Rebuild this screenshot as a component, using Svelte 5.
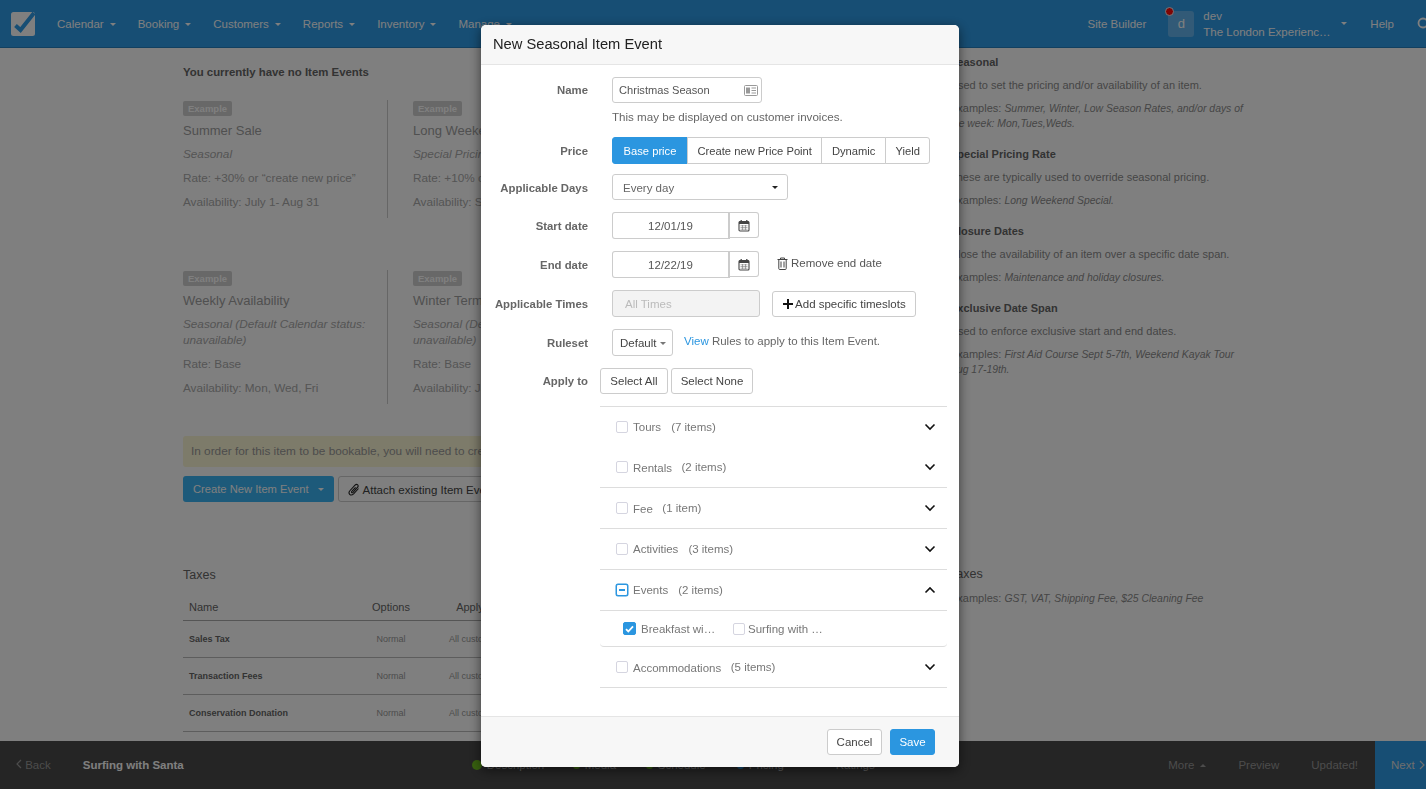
<script>
  const navItems = ['Calendar', 'Booking', 'Customers', 'Reports', 'Inventory', 'Manage'];

  const eventCards = [
    [
      { title: 'Summer Sale', kind: 'Seasonal', rate: 'Rate: +30% or “create new price”', avail: 'Availability: July 1- Aug 31' },
      { title: 'Long Weekend', kind: 'Special Pricing Rate', rate: 'Rate: +10% or “create new price”', avail: 'Availability: Sept 1-3' }
    ],
    [
      { title: 'Weekly Availability', kind: 'Seasonal (Default Calendar status: unavailable)', rate: 'Rate: Base', avail: 'Availability: Mon, Wed, Fri' },
      { title: 'Winter Term', kind: 'Seasonal (Default Calendar status: unavailable)', rate: 'Rate: Base', avail: 'Availability: Jan 5-Mar 20' }
    ]
  ];

  const taxes = ['Sales Tax', 'Transaction Fees', 'Conservation Donation'];

  const steps = [
    { label: 'Description', color: '#6fc01f', size: 10, width: 101 },
    { label: 'Media', color: '#6fc01f', size: 7, width: 73 },
    { label: 'Schedule', color: '#6fc01f', size: 7, width: 91 },
    { label: 'Pricing', color: '#2e9ce8', size: 7, width: 87 },
    { label: 'Ratings', color: 'transparent', size: 7, width: 60 }
  ];

  const prices = ['Base price', 'Create new Price Point', 'Dynamic', 'Yield'];

  const categories = [
    { name: 'Tours', count: '(7 items)', line: false },
    { name: 'Rentals', count: '(2 items)', line: true, low: true },
    { name: 'Fee', count: '(1 item)', line: true, low: true },
    { name: 'Activities', count: '(3 items)', line: true },
    { name: 'Events', count: '(2 items)', line: true, open: true },
    { name: 'Accommodations', count: '(5 items)', line: true, low: true }
  ];
</script>

{#snippet calendar()}
  <svg class="ico" width="12" height="13" viewBox="0 0 12 13" aria-hidden="true">
    <rect x="1" y="2.5" width="10" height="9.5" rx="1" fill="none" stroke="#444" stroke-width="1.1"/>
    <rect x="1" y="2.5" width="10" height="2.5" fill="#444"/>
    <path d="M3.2 1v2M8.8 1v2" stroke="#444" stroke-width="1.3"/>
    <path d="M2.5 6.8h7M2.5 8.5h7M2.5 10.2h7M4.5 6v5M7.5 6v5" stroke="#777" stroke-width=".6"/>
  </svg>
{/snippet}

{#snippet chevron(up)}
  <svg class="chev" width="12" height="8" viewBox="0 0 12 8" aria-hidden="true">
    <path d={up ? 'M1.5 6.5 6 2l4.500 4.500' : 'M1.500 1.500 6 6l4.500-4.500'} fill="none" stroke="#111" stroke-width="1.600"/>
  </svg>
{/snippet}

<div class="page">
  <nav class="topbar">
    <svg class="logo" width="26" height="26" viewBox="0 0 26 26" aria-hidden="true">
      <rect x="0" y="2" width="24" height="24" rx="2.500" fill="#fff"/>
      <path d="M4.500 15.500 9.500 20 23 3" fill="none" stroke="#2e9ce8" stroke-width="4"/>
    </svg>
    <ul class="menu">
      {#each navItems as item}
        <li>{item}<span class="caret"></span></li>
      {/each}
    </ul>
    <div class="nav-right">
      <span>Site Builder</span>
      <div class="account">
        <div class="avatar">d<span class="dot"></span></div>
        <div class="who">
          <div>dev</div>
          <div>The London Experienc…</div>
        </div>
        <span class="caret"></span>
      </div>
      <span>Help</span>
      <svg class="search" width="14" height="14" viewBox="0 0 14 14" aria-hidden="true">
        <circle cx="6" cy="6" r="4.500" fill="none" stroke="#fff" stroke-width="1.800"/>
        <path d="m9.500 9.500 4 4" stroke="#fff" stroke-width="2"/>
      </svg>
    </div>
  </nav>

  <main class="content">
    <section class="left">
      <h4>You currently have no Item Events</h4>
      {#each eventCards as row}
        <div class="card-row">
          {#each row as card}
            <article class="card">
              <span class="badge">Example</span>
              <h3>{card.title}</h3>
              <p><em>{card.kind}</em></p>
              <p>{card.rate}</p>
              <p>{card.avail}</p>
            </article>
          {/each}
        </div>
      {/each}

      <div class="alert">In order for this item to be bookable, you will need to create an Item Event.</div>
      <div class="actions">
        <button class="btn-create">Create New Item Event<span class="caret"></span></button>
        <button class="btn-attach">
          <svg width="12" height="13" viewBox="0 0 12 13" aria-hidden="true">
            <path d="M10.500 5.500 5.600 10.800c-1.300 1.300-3 1.400-3.900.5-.9-.9-.8-2.500.4-3.800L7 2.200c.9-.9 2-1 2.700-.4.700.7.600 1.800-.3 2.700L5 9.300c-.5.500-1 .5-1.300.2-.3-.3-.2-.8.300-1.300l3.600-3.900" fill="none" stroke="#222" stroke-width="1.100"/>
          </svg>
          Attach existing Item Event
        </button>
      </div>

      <h2 class="taxes">Taxes</h2>
      <table>
        <thead>
          <tr><th class="c-name">Name</th><th class="c-opt">Options</th><th class="c-apply">Apply to</th><th></th></tr>
        </thead>
        <tbody>
          {#each taxes as tax}
            <tr><td class="c-name"><b>{tax}</b></td><td class="c-opt">Normal</td><td class="c-apply">All customers</td><td></td></tr>
          {/each}
        </tbody>
      </table>
    </section>

    <aside class="help">
      <h5>Seasonal</h5>
      <p>Used to set the pricing and/or availability of an item.</p>
      <p>Examples: <em>Summer, Winter, Low Season Rates, and/or days of the week: Mon,Tues,Weds.</em></p>
      <h5>Special Pricing Rate</h5>
      <p>These are typically used to override seasonal pricing.</p>
      <p>Examples: <em>Long Weekend Special.</em></p>
      <h5>Closure Dates</h5>
      <p>Close the availability of an item over a specific date span.</p>
      <p>Examples: <em>Maintenance and holiday closures.</em></p>
      <h5>Exclusive Date Span</h5>
      <p>Used to enforce exclusive start and end dates.</p>
      <p>Examples: <em>First Aid Course Sept 5-7th, Weekend Kayak Tour Aug 17-19th.</em></p>
      <h2 class="help-taxes">Taxes</h2>
      <p>Examples: <em>GST, VAT, Shipping Fee, $25 Cleaning Fee</em></p>
    </aside>
  </main>

  <footer class="bottombar">
    <span class="back">
      <svg width="6" height="10" viewBox="0 0 6 10" aria-hidden="true"><path d="M5 1 1 5l4 4" fill="none" stroke="currentColor" stroke-width="1.200"/></svg>
      Back
    </span>
    <span class="item-name">Surfing with Santa</span>
    <div class="steps">
      {#each steps as step}
        <span class="step" style="width:{step.width}px"><i style="background:{step.color};width:{step.size}px;height:{step.size}px"></i>{step.label}</span>
      {/each}
    </div>
    <div class="bottom-right">
      <span>More<span class="caret up"></span></span>
      <span>Preview</span>
      <span>Updated!</span>
      <span class="next">Next
        <svg width="6" height="10" viewBox="0 0 6 10" aria-hidden="true"><path d="m1 1 4 4-4 4" fill="none" stroke="currentColor" stroke-width="1.200"/></svg>
      </span>
    </div>
  </footer>
</div>

<div class="backdrop"></div>

<div class="modal" role="dialog" aria-label="New Seasonal Item Event">
  <header class="modal-head">New Seasonal Item Event</header>

  <div class="modal-body">
    <div class="row">
      <div class="label top">Name</div>
      <div>
        <div class="input name-input">
          Christmas Season
          <svg width="14" height="11" viewBox="0 0 14 11" aria-hidden="true">
            <rect x=".5" y=".5" width="13" height="10" rx="1" fill="none" stroke="#999"/>
            <rect x="2" y="2.500" width="4" height="6" fill="#999"/>
            <path d="M7.500 3h4.500M7.500 5.500h4.500M7.500 8h4.500" stroke="#999"/>
          </svg>
        </div>
        <div class="hint">This may be displayed on customer invoices.</div>
      </div>
    </div>

    <div class="row">
      <div class="label">Price</div>
      <div class="seg">
        {#each prices as price, i}
          <button class:active={i === 0}>{price}</button>
        {/each}
      </div>
    </div>

    <div class="row days">
      <div class="label">Applicable Days</div>
      <div class="select">Every day<span class="caret dark"></span></div>
    </div>

    <div class="row">
      <div class="label">Start date</div>
      <div class="date">
        <div class="date-input">12/01/19</div>
        <button class="date-btn">{@render calendar()}</button>
      </div>
    </div>

    <div class="row">
      <div class="label">End date</div>
      <div class="inline">
        <div class="date">
          <div class="date-input">12/22/19</div>
          <button class="date-btn">{@render calendar()}</button>
        </div>
        <span class="remove">
          <svg width="11" height="13" viewBox="0 0 11 13" aria-hidden="true">
            <path d="M.5 2.500h10M3.500 2.500V1h4v1.500M1.800 2.500v9.200c0 .5.300.8.800.8h5.800c.5 0 .8-.3.800-.8V2.500M4 4.500v6M7 4.500v6" fill="none" stroke="#444" stroke-width="1"/>
          </svg>
          Remove end date
        </span>
      </div>
    </div>

    <div class="row">
      <div class="label">Applicable Times</div>
      <div class="inline times">
        <div class="all-times">All Times</div>
        <button class="btn">
          <svg width="10" height="10" viewBox="0 0 10 10" aria-hidden="true"><path d="M5 0v10M0 5h10" stroke="#111" stroke-width="2"/></svg>
          Add specific timeslots
        </button>
      </div>
    </div>

    <div class="row">
      <div class="label">Ruleset</div>
      <div class="inline ruleset">
        <button class="btn">Default<span class="caret grey"></span></button>
        <span class="rules"><a href="#rules">View</a> Rules to apply to this Item Event.</span>
      </div>
    </div>

    <div class="row">
      <div class="label">Apply to</div>
      <div class="apply">
        <button class="btn">Select All</button>
        <button class="btn">Select None</button>
      </div>
    </div>

    <div class="cats">
      {#each categories as cat}
        <div class="cat" class:line={cat.line} class:low={cat.low}>
          {#if cat.open}
            <span class="box partial"><span></span></span>
          {:else}
            <span class="box"></span>
          {/if}
          <span class="cat-name">{cat.name}</span>
          <span class="cat-count">{cat.count}</span>
          {@render chevron(cat.open)}
        </div>
        {#if cat.open}
          <div class="sub">
            <span class="box checked">
              <svg width="9" height="8" viewBox="0 0 9 8" aria-hidden="true"><path d="M1 4.200 3.300 6.500 8 1.300" fill="none" stroke="#fff" stroke-width="1.800"/></svg>
            </span>
            <span class="sub-name first">Breakfast wi…</span>
            <span class="box"></span>
            <span class="sub-name">Surfing with …</span>
          </div>
        {/if}
      {/each}
    </div>
  </div>

  <footer class="modal-foot">
    <button class="btn">Cancel</button>
    <button class="btn primary">Save</button>
  </footer>
</div>

<style>
  :global(body) {
    margin: 0;
    overflow: hidden;
    font-family: "Liberation Sans", Arial, sans-serif;
    font-size: 11.500px;
    color: #333;
  }
  button {
    font: inherit;
    cursor: pointer;
  }
  .page {
    height: 100vh;
    display: flex;
    flex-direction: column;
    background: #fff;
    overflow: hidden;
  }

  .topbar {
    flex: 0 0 47px;
    display: flex;
    align-items: center;
    padding-left: 11px;
    background: #2e9ce8;
    border-bottom: 1px solid #2580c0;
    color: #fff;
  }
  .logo {
    margin-top: -1px;
  }
  .menu {
    display: flex;
    gap: 22px;
    list-style: none;
    margin: 0 0 0 20px;
    padding: 0;
  }
  .caret {
    display: inline-block;
    width: 0;
    height: 0;
    margin-left: 6px;
    vertical-align: 2px;
    border-left: 3px solid transparent;
    border-right: 3px solid transparent;
    border-top: 3px solid currentColor;
  }
  .caret.up {
    border-top: 0;
    border-bottom: 3px solid currentColor;
  }
  .caret.dark {
    color: #222;
  }
  .caret.grey {
    color: #777;
  }
  .nav-right {
    margin-left: auto;
    display: flex;
    align-items: center;
    margin-right: -5px;
  }
  .account {
    display: flex;
    align-items: center;
    margin: 0 23px 0 22px;
  }
  .avatar {
    position: relative;
    width: 26px;
    height: 26px;
    border-radius: 3px;
    background: #65b5ee;
    text-align: center;
    line-height: 26px;
    font-size: 13px;
  }
  .dot {
    position: absolute;
    top: -4px;
    left: -3px;
    width: 7px;
    height: 7px;
    border-radius: 50%;
    background: #ff0a0a;
    border: 1px solid #e8f2fa;
  }
  .who {
    margin-left: 9px;
    line-height: 16px;
    width: 132px;
    white-space: nowrap;
  }
  .search {
    margin-left: 23px;
  }

  .content {
    flex: 1;
    min-height: 0;
    display: grid;
    grid-template-columns: 950px 1fr;
    overflow: hidden;
    font-size: 11.750px;
    color: #aaa;
  }
  .left {
    padding: 17px 10px 0 183px;
  }
  h4 {
    margin: 0 0 20px;
    font-size: 11.400px;
    line-height: 15px;
    color: #666;
  }
  .card-row {
    display: flex;
    margin-bottom: 52px;
  }
  .card {
    flex: 0 0 205px;
    min-height: 118px;
    box-sizing: border-box;
    margin-right: 25px;
    padding: 1px 12px 0 0;
    border-right: 1px solid #ccc;
  }
  .card + .card {
    border-right: 0;
  }
  .badge {
    display: inline-block;
    padding: 0 5px;
    height: 15px;
    line-height: 15px;
    border-radius: 2px;
    background: #d0d0d0;
    color: #fff;
    font-size: 9.500px;
    font-weight: bold;
  }
  .card h3 {
    margin: 6px 0 6px;
    font-size: 13px;
    font-weight: normal;
    line-height: 18px;
    color: #a0a0a0;
  }
  .card p {
    margin: 0 0 8px;
    line-height: 16px;
  }
  .alert {
    margin-top: -20px;
    height: 31px;
    line-height: 31px;
    padding-left: 8px;
    border-radius: 3px;
    background: #fbf6d4;
    color: #999;
    font-size: 11.800px;
    white-space: nowrap;
  }
  .actions {
    display: flex;
    gap: 4px;
    margin-top: 9px;
  }
  .btn-create {
    width: 151px;
    height: 26px;
    padding: 0 0 0 10px;
    text-align: left;
    border: 0;
    border-radius: 3px;
    background: #3ab4f4;
    color: #fff;
    font-size: 11.200px;
  }
  .btn-create .caret {
    margin-left: 9px;
  }
  .btn-attach {
    height: 26px;
    padding: 0 9px;
    border: 1px solid #ccc;
    border-radius: 3px;
    background: #fff;
    color: #444;
    font-size: 11.500px;
    white-space: nowrap;
  }
  .btn-attach svg {
    vertical-align: -2px;
  }
  .taxes {
    margin: 65px 0 9px;
    font-size: 12.500px;
    font-weight: normal;
    line-height: 17px;
    color: #666;
  }
  table {
    width: 100%;
    table-layout: fixed;
    border-collapse: collapse;
  }
  th {
    height: 27px;
    padding: 0;
    font-size: 11px;
    font-weight: normal;
    color: #666;
    border-bottom: 1px solid #aaa;
  }
  td {
    height: 37px;
    padding: 0 0 1px;
    box-sizing: border-box;
    font-size: 9px;
    color: #999;
    border-bottom: 1px solid #bbb;
  }
  td b {
    color: #666;
  }
  th.c-name,
  td.c-name {
    width: 169px;
    padding-left: 6px;
    text-align: left;
  }
  .c-opt {
    width: 66px;
    text-align: center;
  }
  .c-apply {
    width: 104px;
    text-align: center;
  }

  .help {
    padding-top: 7px;
    width: 300px;
    font-size: 11px;
    color: #8c8c8c;
  }
  .help em {
    font-size: 10.400px;
  }
  h5 {
    margin: 0;
    font-size: 11px;
    line-height: 15px;
    color: #666;
  }
  .help p {
    margin: 8px 0 0;
    line-height: 15px;
  }
  .help p + h5 {
    margin-top: 16px;
  }
  .help-taxes {
    margin: 189px 0 0;
    font-size: 12.500px;
    font-weight: normal;
    line-height: 17px;
    color: #666;
  }

  .bottombar {
    flex: 0 0 48px;
    display: flex;
    align-items: center;
    background: #4a4a4a;
    color: #aaa;
  }
  .back {
    margin-left: 16px;
    color: #999;
  }
  .item-name {
    margin-left: 32px;
    font-weight: bold;
    color: #fff;
  }
  .steps {
    margin-left: 288px;
    display: flex;
  }
  .step {
    flex: none;
    display: flex;
    align-items: center;
    gap: 5px;
    color: #bbb;
    white-space: nowrap;
  }
  .step i {
    display: block;
    border-radius: 50%;
  }
  .bottom-right {
    margin-left: auto;
    height: 100%;
    display: flex;
    align-items: center;
    gap: 32px;
    color: #999;
  }
  .next {
    width: 51px;
    height: 100%;
    box-sizing: border-box;
    padding-left: 16px;
    display: flex;
    align-items: center;
    gap: 4px;
    margin-left: -15px;
    background: #2e9ce8;
    color: #ddd;
  }

  .backdrop {
    position: fixed;
    inset: 0;
    background: rgba(0, 0, 0, 0.5);
  }
  .modal {
    position: fixed;
    top: 25px;
    left: 481px;
    width: 478px;
    background: #fff;
    border-radius: 5px;
    box-shadow: 0 3px 12px rgba(0, 0, 0, 0.55);
    overflow: hidden;
    color: #444;
  }
  .modal-head {
    height: 39px;
    line-height: 39px;
    padding-left: 12px;
    background: #f7f7f7;
    border-bottom: 1px solid #e5e5e5;
    font-size: 14.700px;
    color: #222;
  }
  .modal-body {
    padding: 12px 0 28px;
    display: flex;
    flex-direction: column;
    gap: 12px;
  }
  .row {
    display: grid;
    grid-template-columns: 107px 1fr;
    column-gap: 24px;
    align-items: center;
  }
  .row.days {
    margin-top: -2px;
  }
  .row.days .label {
    padding-top: 1px;
  }
  .label {
    text-align: right;
    font-weight: bold;
    font-size: 11.350px;
    color: #666;
  }
  .label.top {
    align-self: start;
    line-height: 26px;
  }
  .input {
    height: 26px;
    box-sizing: border-box;
    border: 1px solid #ccc;
    border-radius: 3px;
    line-height: 25px;
  }
  .name-input {
    width: 150px;
    display: flex;
    align-items: center;
    justify-content: space-between;
    padding: 0 3px 0 6px;
    font-size: 11.100px;
    color: #555;
  }
  .hint {
    margin: 6px 0 1px;
    line-height: 15px;
    font-size: 11.600px;
    color: #666;
  }
  .seg {
    display: flex;
  }
  .seg button {
    height: 27px;
    padding: 0 9.500px;
    margin-left: -1px;
    border: 1px solid #ccc;
    background: #fff;
    color: #444;
    font-size: 11.200px;
    white-space: nowrap;
  }
  .seg button:first-child {
    margin-left: 0;
    width: 76px;
    padding: 0;
    border-radius: 3px 0 0 3px;
  }
  .seg button:last-child {
    border-radius: 0 3px 3px 0;
  }
  .seg .active {
    background: #2b96e0;
    border-color: #2b96e0;
    color: #fff;
    font-weight: 500;
  }
  .select {
    width: 176px;
    height: 26px;
    box-sizing: border-box;
    display: flex;
    align-items: center;
    justify-content: space-between;
    padding: 1px 9px 0 10px;
    border: 1px solid #ccc;
    border-radius: 3px;
    color: #666;
  }
  .date {
    display: flex;
    align-items: flex-start;
  }
  .date-input {
    width: 118px;
    height: 27px;
    box-sizing: border-box;
    line-height: 26px;
    text-align: center;
    border: 1px solid #ccc;
    border-right-width: 2px;
    border-radius: 3px 0 0 3px;
    color: #555;
  }
  .date-btn {
    width: 29px;
    height: 26px;
    padding: 0;
    border: 1px solid #ccc;
    border-left: 0;
    border-radius: 0 3px 3px 0;
    background: #fff;
  }
  .ico {
    display: block;
    margin: 0 auto;
  }
  .inline {
    display: flex;
    align-items: center;
  }
  .remove {
    margin: -3px 0 0 18px;
    display: flex;
    align-items: center;
    gap: 3px;
    color: #555;
  }
  .times {
    gap: 12px;
  }
  .all-times {
    width: 148px;
    height: 27px;
    box-sizing: border-box;
    padding-left: 12px;
    line-height: 27px;
    border: 1px solid #ccc;
    border-radius: 3px;
    background: #f3f3f3;
    color: #bbb;
  }
  .btn {
    height: 26px;
    padding: 0 10px;
    border: 1px solid #ccc;
    border-radius: 3px;
    background: #fff;
    color: #444;
    white-space: nowrap;
  }
  .times .btn {
    padding: 0 9.500px;
  }
  .times .btn svg {
    vertical-align: -1px;
  }
  .ruleset .btn {
    width: 61px;
    height: 27px;
    padding: 0 0 0 7px;
    text-align: left;
  }
  .ruleset .caret {
    margin-left: 4px;
  }
  .rules {
    margin: -3px 0 0 11px;
    color: #666;
  }
  .rules a {
    color: #2b96e0;
    text-decoration: none;
  }
  .apply {
    margin-left: -12px;
    display: flex;
    gap: 3px;
  }
  .apply .btn {
    width: 68px;
    padding: 0;
  }
  .apply .btn + .btn {
    width: 82px;
  }
  .cats {
    margin-left: 119px;
    width: 347px;
    border-top: 1px solid #ddd;
  }
  .cat {
    height: 40px;
    display: flex;
    align-items: center;
    padding-left: 16px;
    color: #777;
  }
  .cat.line {
    border-bottom: 1px solid #ddd;
  }
  .cat.low .cat-name {
    margin-top: 1px;
  }
  .cat.low .cat-count {
    margin: -1px 0 0 9.500px;
  }
  .cat-name {
    margin-left: 5px;
  }
  .cat-count {
    margin-left: 10px;
  }
  .chev {
    margin-left: auto;
    margin-right: 11px;
  }
  .box {
    flex: none;
    width: 10px;
    height: 10px;
    border: 1px solid #d5d5e0;
    border-radius: 2px;
    background: #fff;
  }
  .box.partial {
    display: flex;
    align-items: center;
    justify-content: center;
    border-color: #2b96e0;
    box-shadow: 0 0 0 .5px #2b96e0;
  }
  .box.partial span {
    width: 6px;
    height: 1.500px;
    background: #2b96e0;
  }
  .box.checked {
    width: 11px;
    height: 11px;
    display: flex;
    align-items: center;
    justify-content: center;
    border-color: #2b96e0;
    background: #2b96e0;
  }
  .sub {
    height: 35px;
    display: flex;
    align-items: center;
    padding-left: 23px;
    border-bottom: 1px solid #ddd;
    border-radius: 0 0 4px 4px;
    color: #777;
  }
  .sub-name {
    margin-left: 3px;
  }
  .sub-name.first {
    margin-left: 5px;
    width: 92px;
  }
  .modal-foot {
    height: 50px;
    display: flex;
    align-items: center;
    justify-content: flex-end;
    gap: 8px;
    padding-right: 24px;
    background: #f7f7f7;
    border-top: 1px solid #e5e5e5;
  }
  .modal-foot .btn {
    width: 55px;
    padding: 0;
  }
  .modal-foot .primary {
    width: 45px;
    background: #2b96e0;
    border-color: #2b96e0;
    color: #fff;
    font-weight: 500;
  }
</style>
